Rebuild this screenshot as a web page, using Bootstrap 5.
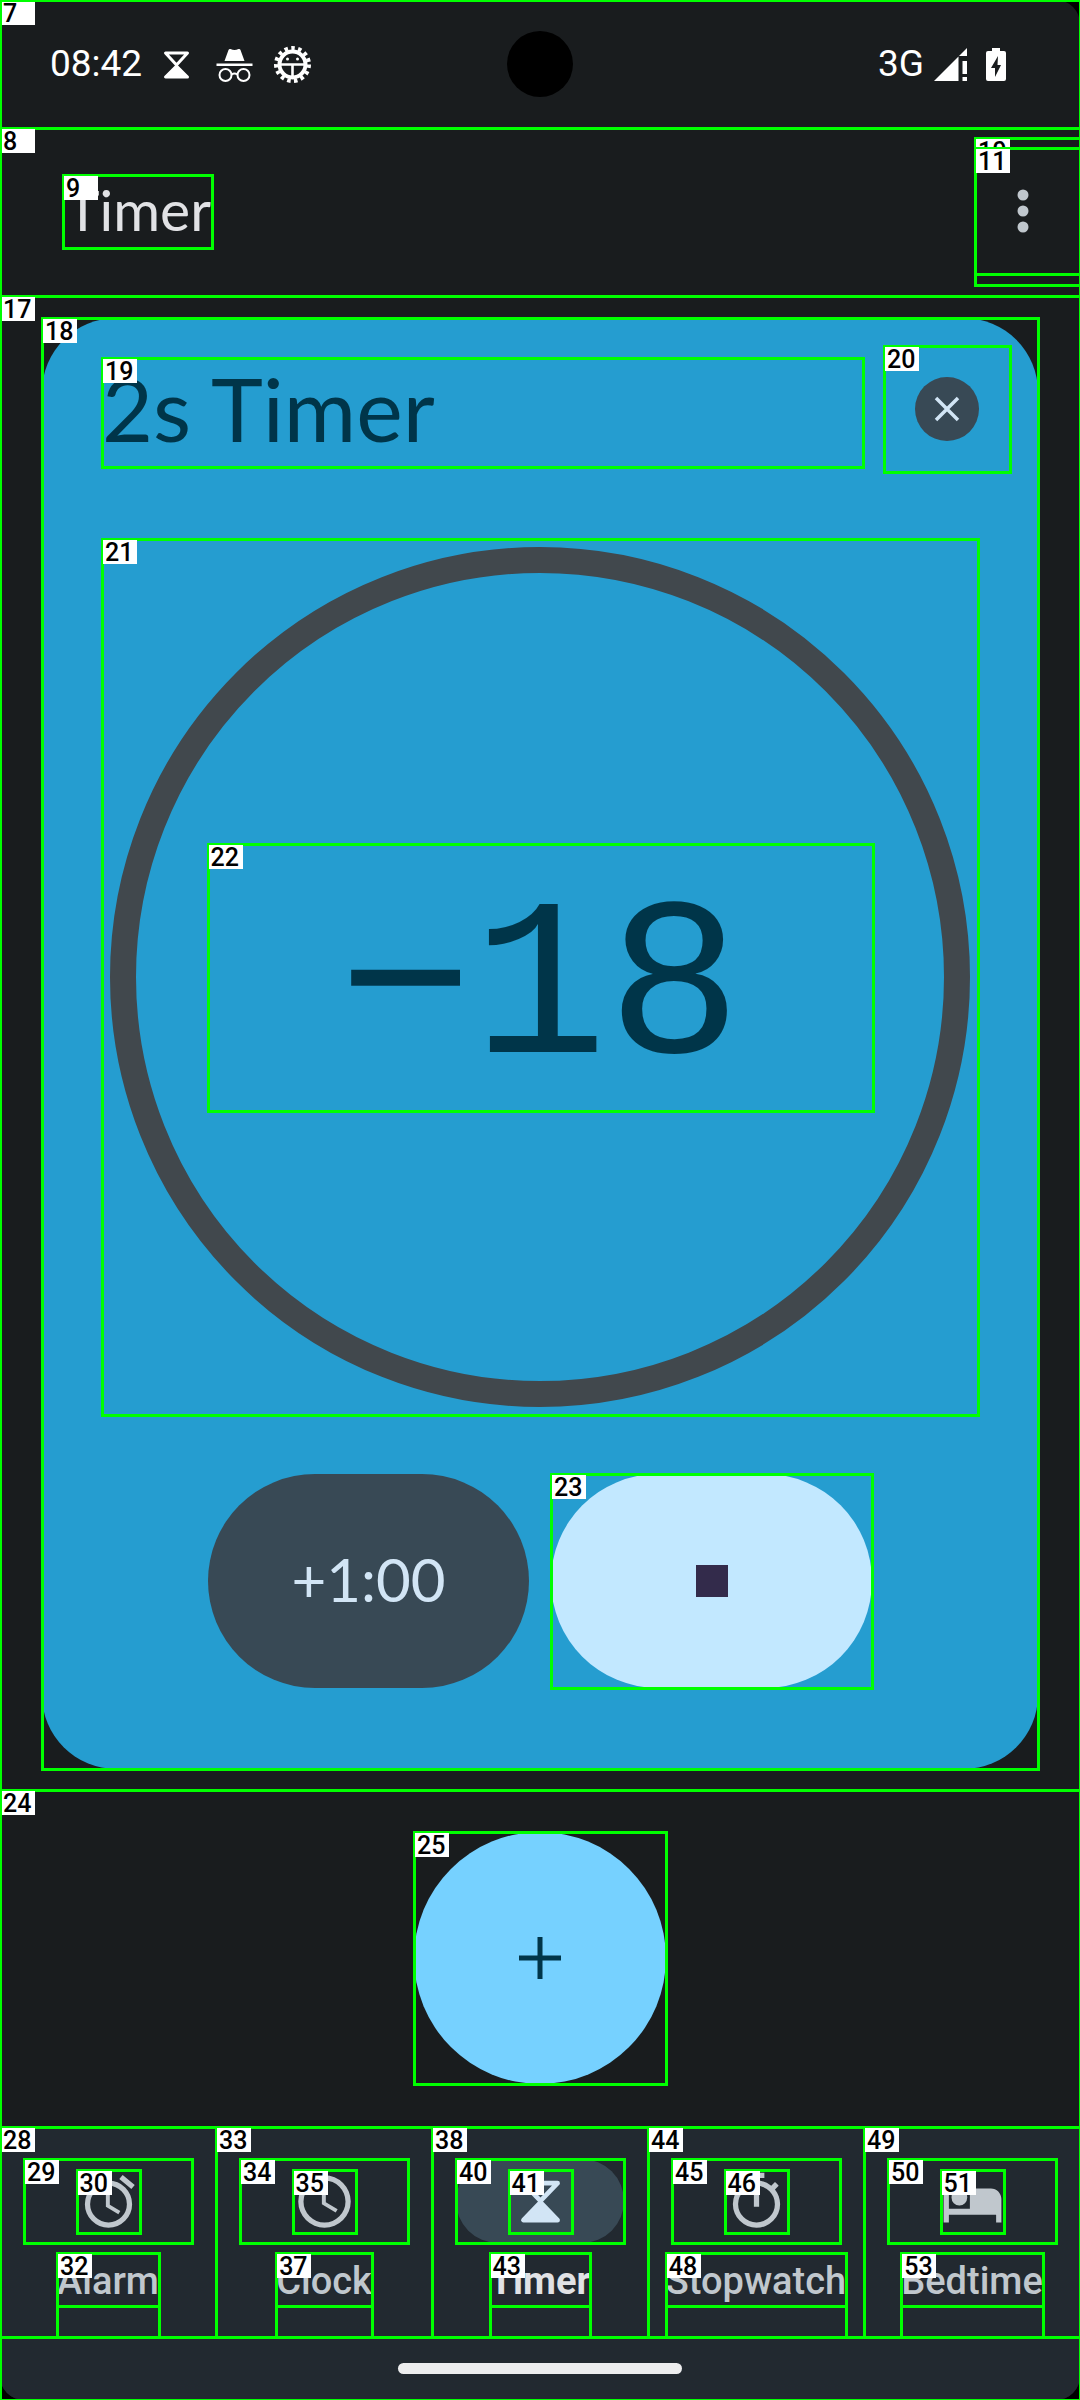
<!DOCTYPE html>
<html lang="en">
<head>
<meta charset="utf-8">
<meta name="viewport" content="width=device-width, initial-scale=1">
<title>Timer</title>
<link href="https://cdn.jsdelivr.net/npm/bootstrap@5.3.0/dist/css/bootstrap.min.css" rel="stylesheet">
<style>
  body { background: #000; font-family: Lato, "Open Sans", sans-serif; overflow-x: hidden; }
  svg { display: block; flex: none; }
  button { border: 0; padding: 0; background: none; color: inherit; }

  /* inspector overlay: outline and number of each view */
  .view { position: relative; }
  .view::before { content: ""; position: absolute; inset: -1px -2px -2px -1px; border: 3px solid #0f0; pointer-events: none; }
  .view-no { position: absolute; left: 1px; top: 1px; width: 34px; height: 24px; padding-left: 2px; background: #fff; color: #000;
    font: 500 25px/26px Roboto, sans-serif; text-align: left; }
  .frame { overflow: hidden; min-height: 100vh; }
  .frame::after { content: ""; position: absolute; inset: -1px 0 0 -1px; border: 1px solid #0f0; border-left-width: 3px; border-top-width: 3px; pointer-events: none; }

  .screen { min-height: 100vh; background: #191c1e; border-radius: 0 24px 24px 24px; overflow: hidden; }
  .status { padding: 31px 74px 31px 50px; color: #fff; font: 400 37px/66px Roboto, sans-serif; }
  .status-icons { gap: 21px; margin-left: 16px; }
  .network { gap: 10px; margin-right: 19px; }
  .camera { width: 66px; height: 66px; background: #000; }

  .appbar { padding: 10px 0 11px 63px; color: #e1e2e5; }
  .appbar h1 { font-size: 57px; line-height: 69px; margin: 0; padding: 0 0 4px 3px; width: 149px; }
  .more-wrap { padding: 10px 0 11px; width: 105px; }
  .more { width: 105px; height: 126px; color: #c0c7cd; padding-right: 10px; }

  .content { padding: 22px 42px 21px; }
  .timer-card { background: #259dd0; border-radius: 74px; padding: 28px 28px 81px 60px; color: #003549; }
  .timer-name { font-size: 88px; line-height: 101px; padding-bottom: 8px; margin: 12px 21px 0 0; font-weight: 400; }
  .close-btn { width: 126px; height: 126px; }
  .dial { margin: 67px 32px 59px 0; padding: 8px; aspect-ratio: 1; }
  .ring { border: 26px solid #41484d; }
  .time-left { width: 665px; padding-top: 30px; font: 400 224px/237px "Liberation Mono", monospace; }
  .actions { gap: 22px; margin: 0 138px 0 106px; }
  .actions button { height: 214px; }
  .add-minute { background: #384955; color: #d2e5f5; font-size: 60px; padding-bottom: 4px; }
  .stop { background: #c2e8ff; color: #332b4b; }

  .fab-zone { padding: 42px 0; }
  .fab { width: 252px; height: 252px; background: #76d1ff; color: #003549; }

  .tabs { background: #222930; }
  .tab-item { padding-top: 32px; color: #c0c7cd; text-decoration: none; font: 500 38px/49px Roboto, sans-serif; }
  .tab-item.active { color: #e1e2e5; font-weight: 700; }
  .tab-pill { width: 168px; height: 84px; margin-bottom: 10px; }
  .active .tab-pill { background: #384955; color: #d2e5f5; }
  .tab-icon svg { width: 63px; height: 63px; }
  .tab-label { padding-bottom: 31px; }
  .tab-text { padding-top: 4px; }
  .gesture { background: #222930; padding: 26px 0; }
  .gesture div { width: 284px; height: 11px; background: #ededee; }
</style>
</head>
<body>
<div class="frame position-relative">
<div class="screen d-flex flex-column">

  <header class="status view d-flex align-items-center">
    <span class="view-no">7</span>
    <div class="d-flex align-items-center flex-fill w-50">
      <span>08:42</span>
      <div class="status-icons d-flex">
        <svg width="37" height="37" viewBox="0 0 37 37" fill="none" stroke="#fff" stroke-width="3" stroke-linejoin="round"><path d="M7.500 7H29.500L18.500 19z"/><path d="M18.500 20L7.500 31H29.500z" fill="#fff"/></svg>
        <svg width="37" height="37" viewBox="0 0 37 37" fill="#fff"><path d="M8.500 15L12.500 4Q13 2.500 14.500 3Q18.500 5 22.500 3Q24 2.500 24.500 4L28.500 15zM.5 17.500H36.500V20H.5z"/><g fill="none" stroke="#fff" stroke-width="2"><circle cx="9.500" cy="29" r="6"/><circle cx="27.500" cy="29" r="6"/><path d="M15.500 28.500Q18.500 26.500 21.500 28.500"/></g></svg>
        <svg width="37" height="37" viewBox="0 0 37 37"><circle cx="18.500" cy="18.500" r="16.500" fill="none" stroke="#fff" stroke-width="4" stroke-dasharray="3.500 3.411"/><circle cx="18.500" cy="18.500" r="13" fill="none" stroke="#fff" stroke-width="4"/><path d="M6 18.500H31M18.500 19V31" stroke="#fff" stroke-width="2.600"/><circle cx="13.500" cy="13" r="1.500" fill="#fff"/><circle cx="23.500" cy="13" r="1.500" fill="#fff"/></svg>
      </div>
    </div>
    <div class="camera rounded-circle flex-shrink-0 ms-4"></div>
    <div class="d-flex align-items-center justify-content-end flex-fill w-50">
      <div class="network d-flex align-items-center">
        <span>3G</span>
        <svg width="33" height="33" viewBox="0 0 33 33" fill="#fff"><path d="M0 33L24.500 8.500V33zM25 8L33 0V8zM28.500 13H33V26H28.500zM28.500 29H33V33H28.500z"/></svg>
      </div>
      <svg width="20" height="33" viewBox="0 0 20 33"><path d="M6 0H14V3H18Q20 3 20 5V31Q20 33 18 33H2Q0 33 0 31V5Q0 3 2 3H6z" fill="#fff"/><path d="M12 8L5 20H9V29L15 17H11.500z" fill="#191c1e"/></svg>
    </div>
  </header>

  <div class="appbar view d-flex align-items-center justify-content-between">
    <span class="view-no">8</span>
    <h1 class="view fw-normal">Timer<span class="view-no">9</span></h1>
    <div class="more-wrap view">
      <span class="view-no">10</span>
      <button class="more view d-flex align-items-center justify-content-center" type="button" aria-label="More options">
        <svg width="12" height="44" viewBox="0 0 12 44" fill="currentColor"><circle cx="6" cy="6" r="5.500"/><circle cx="6" cy="22" r="5.500"/><circle cx="6" cy="38" r="5.500"/></svg>
        <span class="view-no">11</span>
      </button>
    </div>
  </div>

  <main class="content view">
    <span class="view-no">17</span>
    <section class="timer-card view">
      <span class="view-no">18</span>
      <div class="d-flex align-items-start">
        <h2 class="timer-name view flex-fill">2s Timer<span class="view-no">19</span></h2>
        <button class="close-btn view d-flex align-items-center justify-content-center" type="button" aria-label="Delete timer">
          <svg width="64" height="64" viewBox="0 0 64 64"><circle cx="32" cy="32" r="32" fill="#384955"/><path d="M21 21L43 43M43 21L21 43" stroke="#d2e5f5" stroke-width="3.500"/></svg>
          <span class="view-no">20</span>
        </button>
      </div>
      <div class="dial view">
        <span class="view-no">21</span>
        <div class="ring rounded-circle w-100 h-100 d-flex align-items-center justify-content-center">
          <div class="time-left view text-center">−18<span class="view-no">22</span></div>
        </div>
      </div>
      <div class="actions d-flex">
        <button class="add-minute rounded-pill flex-fill w-50" type="button">+1:00</button>
        <button class="stop view rounded-pill flex-fill w-50 d-flex align-items-center justify-content-center" type="button" aria-label="Stop">
          <svg width="32" height="32" viewBox="0 0 32 32"><path d="M0 0H32V32H0z" fill="currentColor"/></svg>
          <span class="view-no">23</span>
        </button>
      </div>
    </section>
  </main>

  <div class="fab-zone view flex-grow-1 d-flex justify-content-center align-items-start">
    <span class="view-no">24</span>
    <button class="fab view rounded-circle d-flex align-items-center justify-content-center" type="button" aria-label="Add timer">
      <svg width="42" height="42" viewBox="0 0 42 42"><path d="M0 21H42M21 0V42" stroke="currentColor" stroke-width="5"/></svg>
      <span class="view-no">25</span>
    </button>
  </div>

  <nav class="tabs row g-0 row-cols-5">
    <a class="tab-item view col d-flex flex-column align-items-center" href="#alarm">
      <span class="view-no">28</span>
      <span class="tab-pill view rounded-pill d-flex align-items-center justify-content-center"><span class="view-no">29</span>
        <span class="tab-icon view"><svg viewBox="0 0 24 24" fill="currentColor"><path d="M22 5.720l-4.600-3.860-1.290 1.530 4.600 3.860L22 5.720zM7.880 3.390L6.600 1.860 2 5.710l1.290 1.530 4.590-3.850zM12.500 8H11v6l4.750 2.850.75-1.230-4-2.370V8zM12 4a9 9 0 100 18 9 9 0 000-18zm0 16a7 7 0 110-14 7 7 0 010 14z"/></svg><span class="view-no">30</span></span></span>
      <span class="tab-label view"><span class="tab-text view d-block">Alarm<span class="view-no">32</span></span></span>
    </a>
    <a class="tab-item view col d-flex flex-column align-items-center" href="#clock">
      <span class="view-no">33</span>
      <span class="tab-pill view rounded-pill d-flex align-items-center justify-content-center"><span class="view-no">34</span>
        <span class="tab-icon view"><svg viewBox="0 0 24 24" fill="currentColor"><path d="M12 2a10 10 0 100 20 10 10 0 000-20zm0 18a8 8 0 110-16 8 8 0 010 16zm.5-13H11v6l5.250 3.150.75-1.230-4.500-2.670z"/></svg><span class="view-no">35</span></span></span>
      <span class="tab-label view"><span class="tab-text view d-block">Clock<span class="view-no">37</span></span></span>
    </a>
    <a class="tab-item active view col d-flex flex-column align-items-center" href="#timer" aria-current="page">
      <span class="view-no">38</span>
      <span class="tab-pill view rounded-pill d-flex align-items-center justify-content-center"><span class="view-no">40</span>
        <span class="tab-icon view"><svg viewBox="0 0 24 24" fill="none" stroke="currentColor" stroke-width="1.800" stroke-linejoin="round"><path d="M5.500 5H18.500L12 11.800z"/><path d="M12 12.300L5.500 19.100H18.500z" fill="currentColor"/></svg><span class="view-no">41</span></span></span>
      <span class="tab-label view"><span class="tab-text view d-block">Timer<span class="view-no">43</span></span></span>
    </a>
    <a class="tab-item view col d-flex flex-column align-items-center" href="#stopwatch">
      <span class="view-no">44</span>
      <span class="tab-pill view rounded-pill d-flex align-items-center justify-content-center"><span class="view-no">45</span>
        <span class="tab-icon view"><svg viewBox="0 0 24 24" fill="currentColor"><path d="M15 1H9v2h6V1zm-4 13h2V8h-2v6zm8.030-6.610l1.420-1.420c-.43-.51-.9-.99-1.410-1.410l-1.420 1.420A8.962 8.962 0 0012 4a9 9 0 109 9c0-2.120-.74-4.070-1.970-5.610zM12 20a7 7 0 110-14 7 7 0 010 14z"/></svg><span class="view-no">46</span></span></span>
      <span class="tab-label view"><span class="tab-text view d-block">Stopwatch<span class="view-no">48</span></span></span>
    </a>
    <a class="tab-item view col d-flex flex-column align-items-center" href="#bedtime">
      <span class="view-no">49</span>
      <span class="tab-pill view rounded-pill d-flex align-items-center justify-content-center"><span class="view-no">50</span>
        <span class="tab-icon view"><svg viewBox="0 0 24 24" fill="currentColor"><path d="M7 13.500a3 3 0 100-6 3 3 0 000 6zM19 7h-8v7.800H3V5H1v15h2v-3h18v3h2v-9c0-2.210-1.790-4-4-4z"/></svg><span class="view-no">51</span></span></span>
      <span class="tab-label view"><span class="tab-text view d-block">Bedtime<span class="view-no">53</span></span></span>
    </a>
  </nav>
  <div class="gesture d-flex justify-content-center"><div class="rounded-pill"></div></div>

</div>
</div>
<script src="https://cdn.jsdelivr.net/npm/bootstrap@5.3.0/dist/js/bootstrap.bundle.min.js"></script>
</body>
</html>
